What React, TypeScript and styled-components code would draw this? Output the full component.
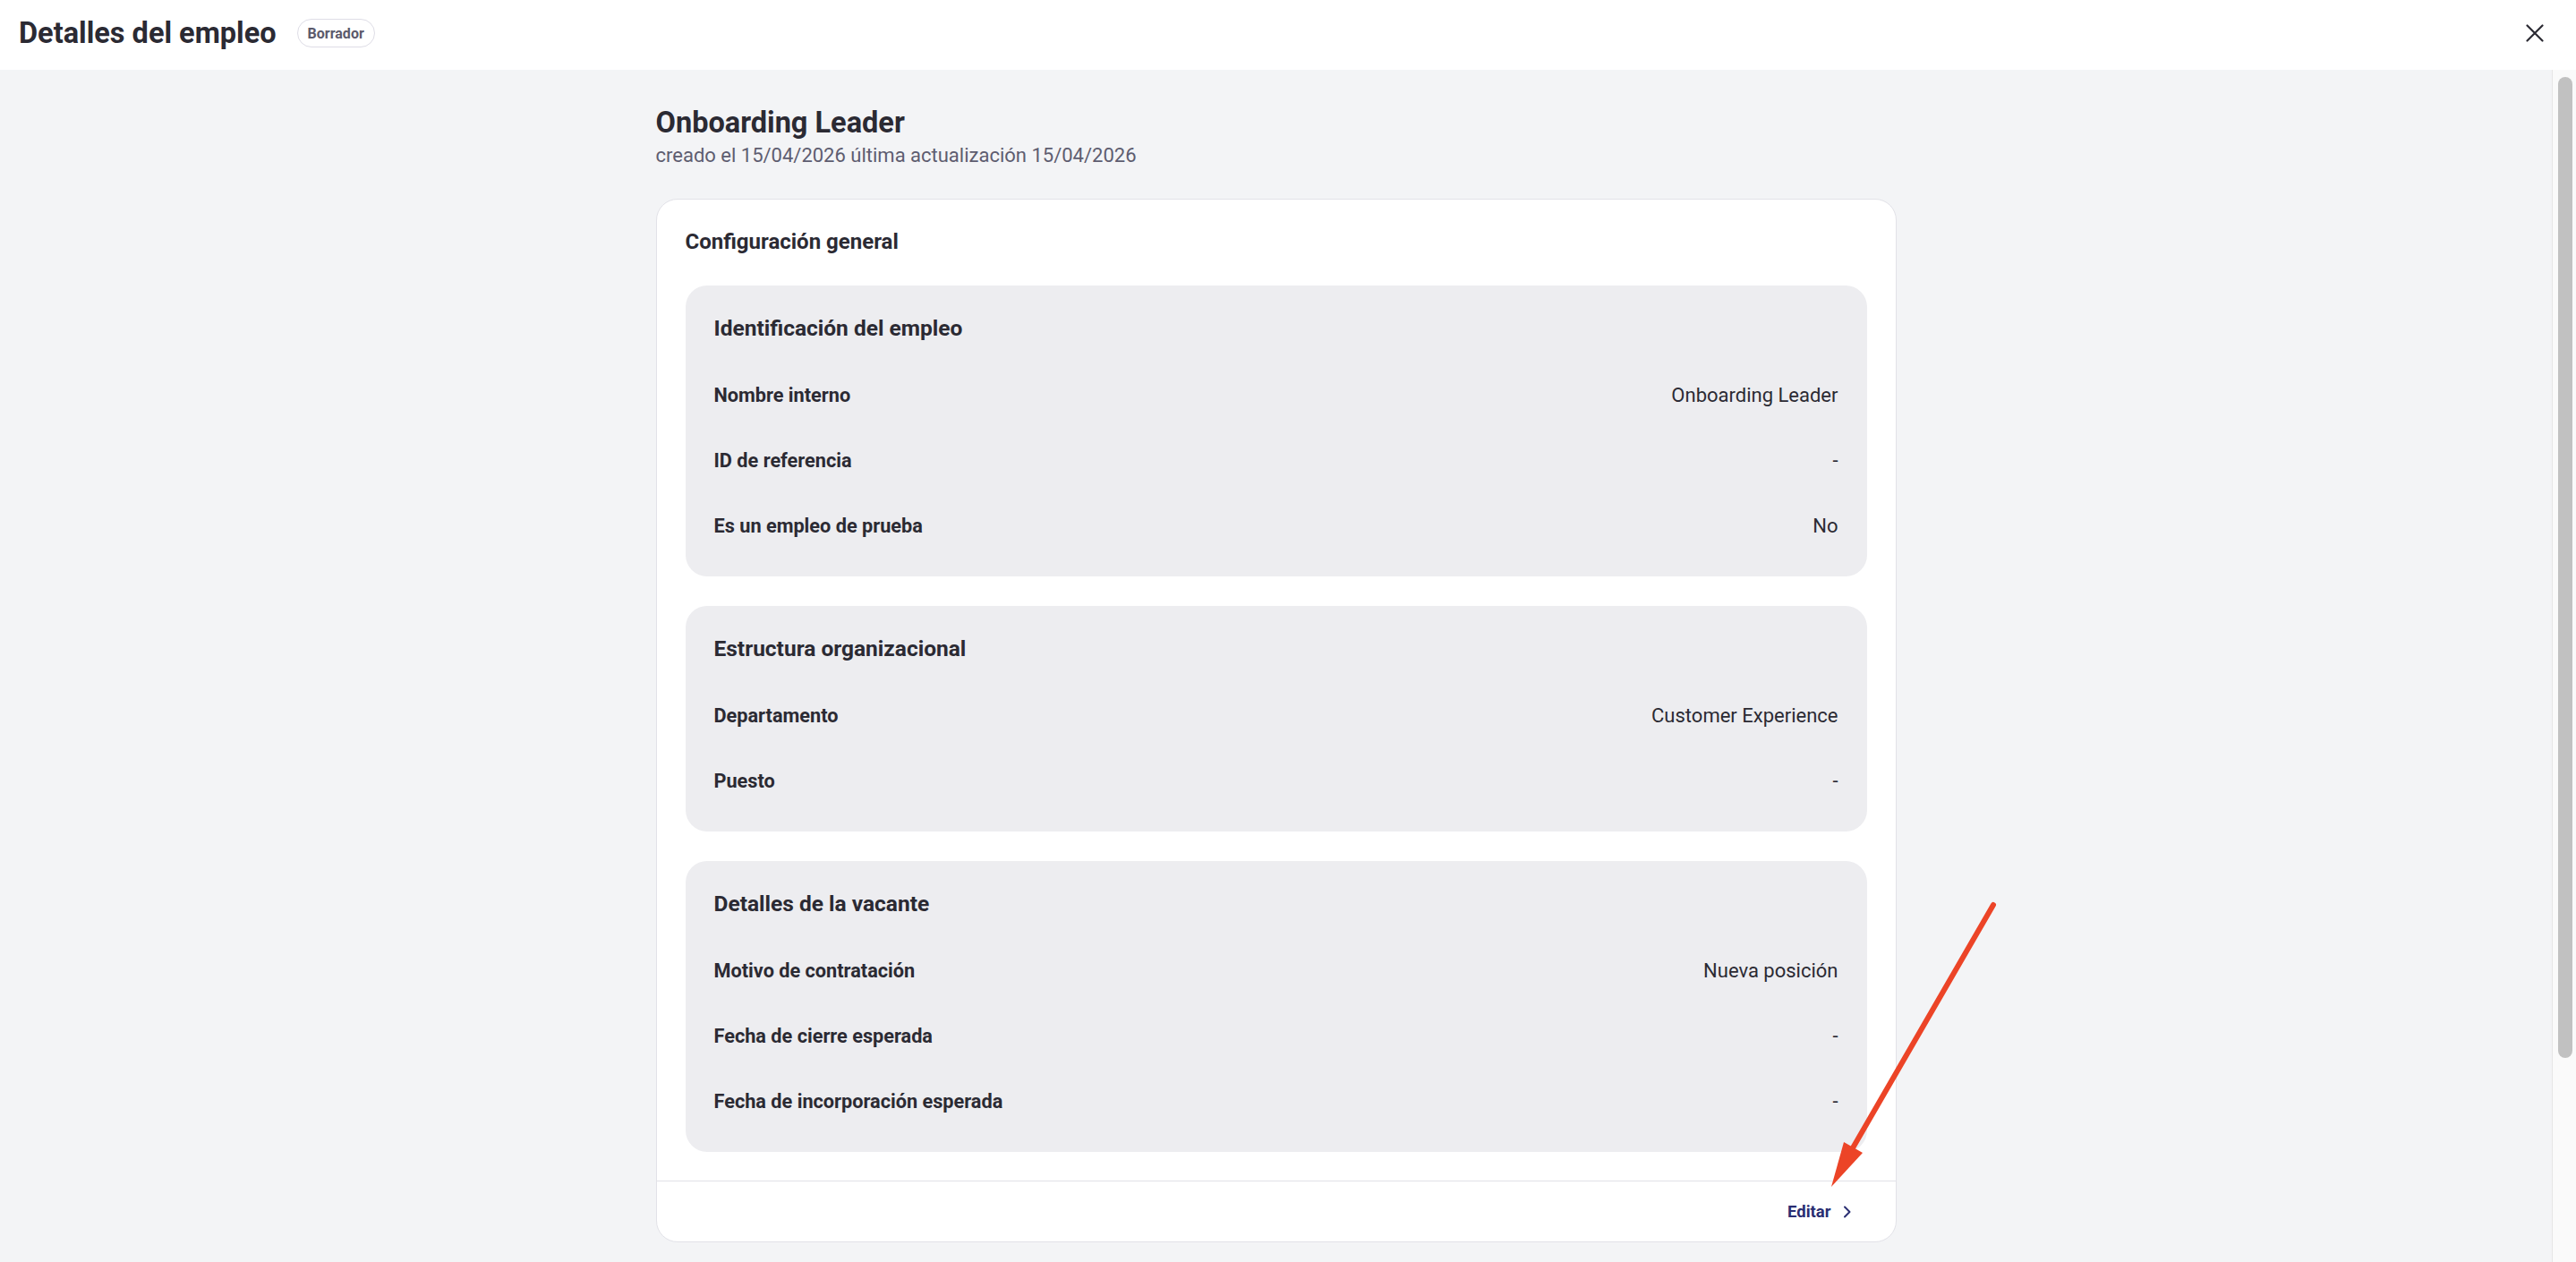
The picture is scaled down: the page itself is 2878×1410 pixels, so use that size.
import React from "react";
import styled, { createGlobalStyle } from "styled-components";

const GlobalStyle = createGlobalStyle`
  html, body {
    margin: 0;
    height: 100%;
    overflow: hidden;
  }
  body {
    font-family: Roboto, "Liberation Sans", Arial, sans-serif;
    color: #2b2a33;
  }
  #root {
    height: 100%;
  }
  * {
    box-sizing: border-box;
  }
`;

const Shell = styled.div`
  position: relative;
  display: flex;
  flex-direction: column;
  height: 100vh;
  background: #ffffff;
`;

const TopBar = styled.header`
  flex: 0 0 78px;
  display: flex;
  align-items: center;
  justify-content: space-between;
  padding: 0 36px 4px 21px;
  background: #ffffff;
`;

const TitleGroup = styled.div`
  display: flex;
  align-items: center;
  gap: 23px;
`;

const HeaderTitle = styled.h1`
  margin: 0;
  font-size: 32.5px;
  line-height: 40px;
  font-weight: 700;
  color: #2b2a33;
`;

const StatusBadge = styled.span`
  display: inline-flex;
  align-items: center;
  height: 32px;
  padding: 0 11px;
  border: 1px solid #dedde6;
  border-radius: 16px;
  font-size: 16px;
  font-weight: 700;
  color: #5b5a6b;
`;

const CloseButton = styled.button`
  display: flex;
  align-items: center;
  justify-content: center;
  width: 20px;
  height: 20px;
  padding: 0;
  border: 0;
  background: none;
  color: #2b2a33;
  cursor: pointer;
`;

const Body = styled.div`
  flex: 1;
  display: flex;
  min-height: 0;
  background: #f3f4f6;
`;

const Scroller = styled.main`
  flex: 1;
  overflow-y: auto;
  scrollbar-width: none;

  &::-webkit-scrollbar {
    display: none;
  }
`;

const ScrollRail = styled.div`
  flex: 0 0 27px;
  padding: 8px 4px 0 6px;
  background: #fafafa;
  border-left: 1px solid #e6e6e6;
`;

const ScrollThumb = styled.div`
  height: 1096px;
  border-radius: 8px;
  background: #c1c1c1;
`;

const Page = styled.div`
  width: 100%;
  max-width: 1386px;
  margin: 0 auto;
  padding: 39px 0 286px;
`;

const JobTitle = styled.h2`
  margin: 0;
  font-size: 32.5px;
  line-height: 40px;
  font-weight: 700;
  color: #2b2a33;
`;

const Meta = styled.p`
  margin: 3px 0 0;
  font-size: 22px;
  line-height: 28px;
  color: #5e5d70;
`;

const Card = styled.section`
  margin-top: 34px;
  background: #ffffff;
  border: 1px solid #e2e2e8;
  border-radius: 24px;
`;

const CardBody = styled.div`
  padding: 33px 32px 32px;
`;

const CardTitle = styled.h3`
  margin: 0 0 35px;
  font-size: 24px;
  line-height: 28px;
  font-weight: 700;
  color: #2b2a33;
`;

const SectionStack = styled.div`
  display: flex;
  flex-direction: column;
  gap: 33px;
`;

const Section = styled.div`
  background: #ededf0;
  border-radius: 24px;
  padding: 33px 32px 42px;
`;

const SectionTitle = styled.h4`
  margin: 0;
  font-size: 24.5px;
  line-height: 30px;
  font-weight: 700;
  color: #2b2a33;
`;

const FieldList = styled.dl`
  display: flex;
  flex-direction: column;
  gap: 45px;
  margin: 46px 0 0;
`;

const Field = styled.div`
  display: flex;
  align-items: center;
  justify-content: space-between;
  line-height: 28px;
`;

const FieldLabel = styled.dt`
  font-size: 21.7px;
  font-weight: 700;
  color: #2b2a33;
`;

const FieldValue = styled.dd`
  margin: 0;
  font-size: 22px;
  font-weight: 400;
  color: #2b2a33;
`;

const CardFooter = styled.div`
  display: flex;
  align-items: center;
  justify-content: flex-end;
  height: 68px;
  padding-right: 49px;
  border-top: 1px solid #e2e2e8;
`;

const EditLink = styled.button`
  display: inline-flex;
  align-items: center;
  gap: 13px;
  padding: 0;
  border: 0;
  background: none;
  font-family: inherit;
  font-size: 18.5px;
  line-height: 24px;
  font-weight: 700;
  color: #2a2e72;
  cursor: pointer;
`;

const Annotation = styled.svg`
  position: absolute;
  left: 2030px;
  top: 1000px;
  pointer-events: none;
  overflow: visible;
`;

interface FieldItem {
  label: string;
  value: string;
}

interface SectionData {
  title: string;
  fields: FieldItem[];
}

const sections: SectionData[] = [
  {
    title: "Identificación del empleo",
    fields: [
      { label: "Nombre interno", value: "Onboarding Leader" },
      { label: "ID de referencia", value: "-" },
      { label: "Es un empleo de prueba", value: "No" },
    ],
  },
  {
    title: "Estructura organizacional",
    fields: [
      { label: "Departamento", value: "Customer Experience" },
      { label: "Puesto", value: "-" },
    ],
  },
  {
    title: "Detalles de la vacante",
    fields: [
      { label: "Motivo de contratación", value: "Nueva posición" },
      { label: "Fecha de cierre esperada", value: "-" },
      { label: "Fecha de incorporación esperada", value: "-" },
    ],
  },
];

export default function App() {
  return (
    <Shell>
      <GlobalStyle />
      <TopBar>
        <TitleGroup>
          <HeaderTitle>Detalles del empleo</HeaderTitle>
          <StatusBadge>Borrador</StatusBadge>
        </TitleGroup>
        <CloseButton aria-label="Cerrar">
          <svg width="20" height="20" viewBox="0 0 20 20">
            <path
              d="M1.5 1.5 L18.5 18.5 M18.5 1.5 L1.5 18.5"
              stroke="currentColor"
              strokeWidth="2.2"
              strokeLinecap="round"
            />
          </svg>
        </CloseButton>
      </TopBar>

      <Body>
        <Scroller>
          <Page>
            <JobTitle>Onboarding Leader</JobTitle>
            <Meta>creado el 15/04/2026 última actualización 15/04/2026</Meta>

            <Card>
              <CardBody>
                <CardTitle>Configuración general</CardTitle>
                <SectionStack>
                  {sections.map((s) => (
                    <Section key={s.title}>
                      <SectionTitle>{s.title}</SectionTitle>
                      <FieldList>
                        {s.fields.map((f) => (
                          <Field key={f.label}>
                            <FieldLabel>{f.label}</FieldLabel>
                            <FieldValue>{f.value}</FieldValue>
                          </Field>
                        ))}
                      </FieldList>
                    </Section>
                  ))}
                </SectionStack>
              </CardBody>
              <CardFooter>
                <EditLink>
                  Editar
                  <svg width="10" height="14" viewBox="0 0 10 14">
                    <path
                      d="M2 1.5 L7.5 7 L2 12.5"
                      fill="none"
                      stroke="currentColor"
                      strokeWidth="2"
                      strokeLinecap="round"
                      strokeLinejoin="round"
                    />
                  </svg>
                </EditLink>
              </CardFooter>
            </Card>
          </Page>
        </Scroller>
        <ScrollRail>
          <ScrollThumb />
        </ScrollRail>
      </Body>

      {/* red annotation arrow pointing at "Editar" */}
      <Annotation width="210" height="340" viewBox="2030 1000 210 340">
        <line
          x1="2227"
          y1="1011"
          x2="2068"
          y2="1286"
          stroke="#ec4427"
          strokeWidth="6"
          strokeLinecap="round"
        />
        <polygon points="2046,1326 2060,1276 2081,1288" fill="#ec4427" />
      </Annotation>
    </Shell>
  );
}
